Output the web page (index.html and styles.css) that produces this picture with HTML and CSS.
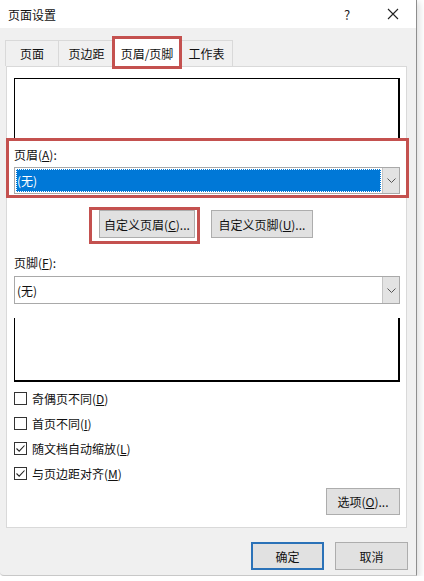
FILE: index.html
```html
<!DOCTYPE html>
<html lang="zh-CN">
<head>
    <meta charset="UTF-8">
    <meta name="viewport" content="width=device-width, initial-scale=1.0">
    <title>页面设置</title>
    <link rel="stylesheet" href="styles.css">
</head>
<body>
    <div class="dialog">
        <div class="titlebar">
            <span class="title">页面设置</span>
            <span class="tb-btn">?</span>
            <span class="tb-btn">
                <svg width="12" height="12" viewBox="0 0 12 12"><path d="M1 1L11 11M11 1L1 11" stroke="#222" stroke-width="1.1" fill="none"/></svg>
            </span>
        </div>

        <div class="tabs">
            <div class="tab tab-page">页面</div>
            <div class="tab tab-margin">页边距</div>
            <div class="tab tab-active">页眉/页脚</div>
            <div class="tab tab-sheet">工作表</div>
        </div>

        <div class="panel">
            <div class="preview preview-head"></div>

            <div class="mark head-group">
                <div class="label">页眉(<u>A</u>):</div>
                <div class="select">
                    <div class="value value-focus"><span>(无)</span></div>
                    <div class="arrow">
                        <svg width="9" height="5" viewBox="0 0 9 5"><path d="M0.5 0.5L4.5 4.5L8.5 0.5" stroke="#555" fill="none"/></svg>
                    </div>
                </div>
            </div>

            <div class="btn-row">
                <span class="mark mark-btn"><button class="btn btn-head">自定义页眉(<u>C</u>)...</button></span>
                <button class="btn btn-foot">自定义页脚(<u>U</u>)...</button>
            </div>

            <div class="label label-foot">页脚(<u>F</u>):</div>
            <div class="select select-foot">
                <div class="value"><span>(无)</span></div>
                <div class="arrow">
                    <svg width="9" height="5" viewBox="0 0 9 5"><path d="M0.5 0.5L4.5 4.5L8.5 0.5" stroke="#555" fill="none"/></svg>
                </div>
            </div>

            <div class="preview preview-foot"></div>

            <div class="checks">
                <label class="check"><span class="box"></span>奇偶页不同(<u>D</u>)</label>
                <label class="check"><span class="box"></span>首页不同(<u>I</u>)</label>
                <label class="check"><span class="box checked"><svg width="11" height="11" viewBox="0 0 11 11"><path d="M1.5 5.5L4.2 8.2L9.5 2.5" stroke="#222" stroke-width="1.1" fill="none"/></svg></span>随文档自动缩放(<u>L</u>)</label>
                <label class="check"><span class="box checked"><svg width="11" height="11" viewBox="0 0 11 11"><path d="M1.5 5.5L4.2 8.2L9.5 2.5" stroke="#222" stroke-width="1.1" fill="none"/></svg></span>与页边距对齐(<u>M</u>)</label>
            </div>

            <div class="options-row">
                <button class="btn btn-options">选项(<u>O</u>)...</button>
            </div>
        </div>

        <div class="footer">
            <button class="btn btn-ok">确定</button>
            <button class="btn btn-cancel">取消</button>
        </div>
    </div>
</body>
</html>
```

FILE: styles.css
```css
body {
    margin: 0;
    background-color: #ffffff;
    font-family: "Noto Sans CJK SC", "Noto Sans", sans-serif;
    font-size: 12px;
    color: #111;
}
.dialog {
    width: 416px;
    height: 575px;
    background-color: #f0f0f0;
    border-right: 1px solid #8e8e8e;
    border-bottom: 1px solid #c8c8c8;
    border-bottom-left-radius: 4px;
    box-shadow: 3px 2px 6px rgba(0, 0, 0, 0.12);
    display: flex;
    flex-direction: column;
}
.titlebar {
    height: 28px;
    background-color: #ffffff;
    display: flex;
    align-items: center;
    padding-left: 8px;
}
.titlebar .title {
    flex: 1;
    font-size: 12px;
}
.tb-btn {
    width: 46px;
    height: 28px;
    display: flex;
    align-items: center;
    justify-content: center;
    font-size: 13px;
    color: #222;
}
.tabs {
    display: flex;
    align-items: flex-end;
    height: 28px;
    margin-top: 10px;
    padding-left: 5px;
    position: relative;
    z-index: 1;
}
.tab {
    height: 26px;
    box-sizing: border-box;
    border: 1px solid #d9d9d9;
    border-bottom: none;
    background-color: #f0f0f0;
    display: flex;
    align-items: center;
    justify-content: center;
    margin-right: -1px;
    margin-bottom: 0;
}
.tab-page { width: 54px; }
.tab-margin { width: 57px; }
.tab-sheet { width: 53px; margin-left: 1px; }
.tab-active {
    width: 66px;
    height: 29px;
    margin-bottom: -1px;
    background-color: #ffffff;
    outline: 3px solid #c4514f;
    outline-offset: -1px;
    position: relative;
    z-index: 2;
}
.panel {
    margin: 0 9px 0 6px;
    background-color: #ffffff;
    border: 1px solid #d9d9d9;
    padding: 11px 6px 12px 7px;
}
.preview {
    border: 1px solid #000;
    box-sizing: border-box;
}
.preview-head {
    height: 60px;
    border-right-width: 2px;
    border-bottom: none;
}
.preview-foot {
    height: 64px;
    margin-top: 14px;
    border-top: none;
    border-right-width: 2px;
    border-bottom-width: 2px;
}
.mark {
    border: 3px solid #c4514f;
}
.head-group {
    margin: 0 -9px 0 -8px;
    padding: 6px 6px 1px 5px;
}
.label {
    line-height: 16px;
    height: 16px;
}
.head-group .label {
    margin-bottom: 4px;
}
.label-foot {
    margin-top: 11px;
    margin-bottom: 5px;
}
.select {
    display: flex;
    height: 27px;
    box-sizing: border-box;
    border: 1px solid #a9a9a9;
    background-color: #ffffff;
}
.select-foot {
    height: 28px;
}
.value {
    flex: 1;
    display: flex;
    align-items: center;
    padding-left: 2px;
}
.value-focus {
    margin: 1px 1px 1px 1px;
    padding-left: 1px;
    background-color: #0078d7;
    color: #ffffff;
    outline: 1px dotted #ffffff;
    outline-offset: -1px;
}
.arrow {
    width: 16px;
    background-color: #e3e3e3;
    border-left: 1px solid #c4c4c4;
    display: flex;
    align-items: center;
    justify-content: center;
}
.btn {
    font-family: "Noto Sans CJK SC", "Noto Sans", sans-serif;
    font-size: 12px;
    color: #111;
    background-color: #e1e1e1;
    border: 1px solid #adadad;
    height: 28px;
    padding: 0;
    box-sizing: border-box;
}
.btn-row {
    display: flex;
    align-items: flex-start;
    margin-top: 9px;
    margin-left: 75px;
}
.mark-btn {
    display: inline-flex;
    padding: 0 2px 3px 7px;
}
.btn-head { width: 96px; }
.btn-foot {
    width: 102px;
    margin-left: 11px;
    margin-top: 3px;
}
.checks {
    margin-top: 4px;
}
.check {
    display: flex;
    align-items: center;
    height: 25px;
}
.box {
    width: 13px;
    height: 13px;
    box-sizing: border-box;
    border: 1px solid #333;
    margin-right: 5px;
    display: flex;
    align-items: center;
    justify-content: center;
}
.options-row {
    display: flex;
    justify-content: flex-end;
    margin-top: 2px;
}
.btn-options {
    width: 74px;
    height: 27px;
}
.footer {
    display: flex;
    justify-content: flex-end;
    margin-top: 14px;
    padding-right: 8px;
}
.btn-ok,
.btn-cancel {
    width: 73px;
    height: 28px;
}
.btn-ok {
    border: 2px solid #2b72b8;
    margin-right: 11px;
}
```
